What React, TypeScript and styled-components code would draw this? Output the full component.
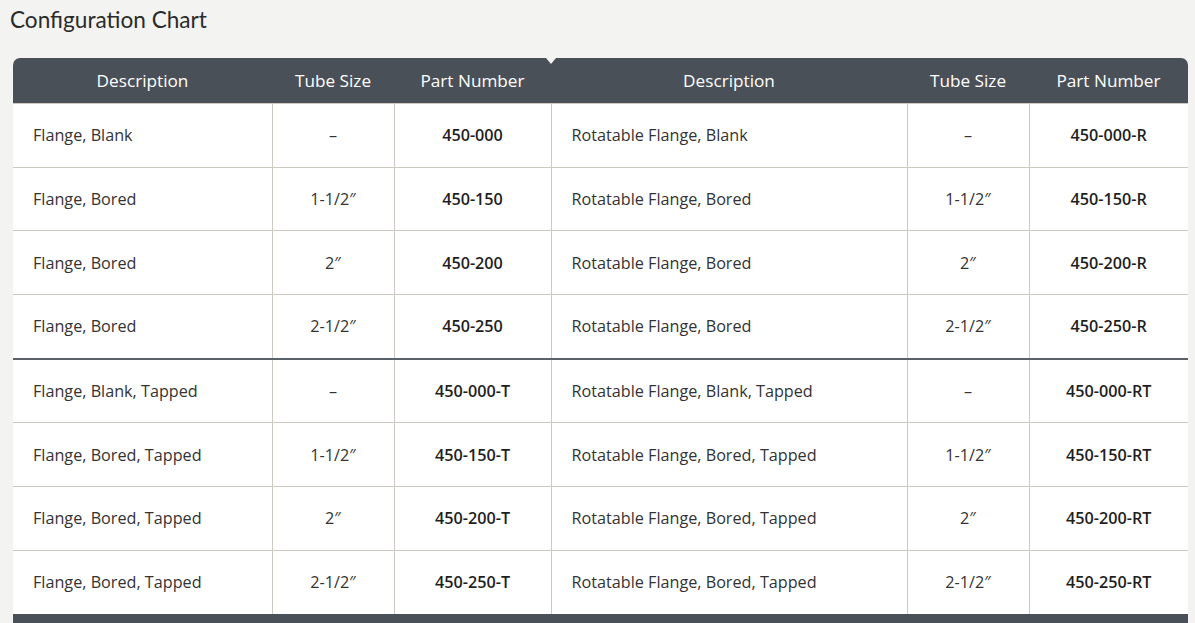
import React from "react";
import styled, { createGlobalStyle } from "styled-components";

const Global = createGlobalStyle`
  html, body { margin: 0; padding: 0; background: #f3f3f1; }
  body { font-family: "Open Sans", "Liberation Sans", sans-serif; }
`;

const Page = styled.div`
  padding: 6px 0 0 13px;
  width: 1175px;
`;

const Title = styled.h2`
  margin: 0 0 0 -3px;
  font-family: Lato, "Open Sans", sans-serif;
  font-weight: 400;
  font-size: 22.6px;
  line-height: 28px;
  color: #2b2b2b;
`;

const TableWrap = styled.div`
  position: relative;
  margin-top: 24px;
  border-radius: 7px 7px 0 0;
  overflow: hidden;
  border-bottom: 10px solid #4a5058;
`;

const Notch = styled.span`
  position: absolute;
  top: 0;
  left: 533px;
  width: 0;
  height: 0;
  border-left: 5px solid transparent;
  border-right: 5px solid transparent;
  border-top: 6px solid #f3f3f1;
`;

const Table = styled.table`
  width: 1175px;
  border-collapse: collapse;
  table-layout: fixed;
  background: #fff;
`;

const Th = styled.th`
  background: #4a5058;
  color: #fff;
  font-weight: 400;
  font-size: 17.2px;
  height: 45px;
  padding: 0;
  text-align: center;
`;

const Tr = styled.tr<{ $divider?: boolean }>`
  border-top: ${(p) => (p.$divider ? "2px solid #5b6168" : "1px solid #cbc9c2")};
`;

const Td = styled.td<{ $align?: "left" | "center"; $bold?: boolean }>`
  height: 62.7px;
  padding: 0 0 0 ${(p) => (p.$align === "left" ? "20px" : "0")};
  text-align: ${(p) => p.$align ?? "center"};
  font-size: 16.2px;
  font-weight: ${(p) => (p.$bold ? 600 : 400)};
  color: ${(p) => (p.$bold ? "#1f1f1f" : "#333")};
  border-left: 1px solid #cbc9c2;
  &:first-child { border-left: none; }
`;

const rows = [
  ["Flange, Blank", "–", "450-000", "Rotatable Flange, Blank", "–", "450-000-R"],
  ["Flange, Bored", "1-1/2″", "450-150", "Rotatable Flange, Bored", "1-1/2″", "450-150-R"],
  ["Flange, Bored", "2″", "450-200", "Rotatable Flange, Bored", "2″", "450-200-R"],
  ["Flange, Bored", "2-1/2″", "450-250", "Rotatable Flange, Bored", "2-1/2″", "450-250-R"],
  ["Flange, Blank, Tapped", "–", "450-000-T", "Rotatable Flange, Blank, Tapped", "–", "450-000-RT"],
  ["Flange, Bored, Tapped", "1-1/2″", "450-150-T", "Rotatable Flange, Bored, Tapped", "1-1/2″", "450-150-RT"],
  ["Flange, Bored, Tapped", "2″", "450-200-T", "Rotatable Flange, Bored, Tapped", "2″", "450-200-RT"],
  ["Flange, Bored, Tapped", "2-1/2″", "450-250-T", "Rotatable Flange, Bored, Tapped", "2-1/2″", "450-250-RT"],
];

const widths = [259, 122, 157, 356, 122, 159];
const heads = ["Description", "Tube Size", "Part Number", "Description", "Tube Size", "Part Number"];

export default function App() {
  return (
    <>
      <Global />
      <Page>
        <Title>Configuration Chart</Title>
        <TableWrap>
          <Table>
            <colgroup>
              {widths.map((w, i) => (
                <col key={i} style={{ width: w }} />
              ))}
            </colgroup>
            <thead>
              <tr>
                {heads.map((h, i) => (
                  <Th key={i}>{h}</Th>
                ))}
              </tr>
            </thead>
            <tbody>
              {rows.map((r, i) => (
                <Tr key={i} $divider={i === 4}>
                  <Td $align="left">{r[0]}</Td>
                  <Td>{r[1]}</Td>
                  <Td $bold>{r[2]}</Td>
                  <Td $align="left">{r[3]}</Td>
                  <Td>{r[4]}</Td>
                  <Td $bold>{r[5]}</Td>
                </Tr>
              ))}
            </tbody>
          </Table>
          <Notch />
        </TableWrap>
      </Page>
    </>
  );
}
